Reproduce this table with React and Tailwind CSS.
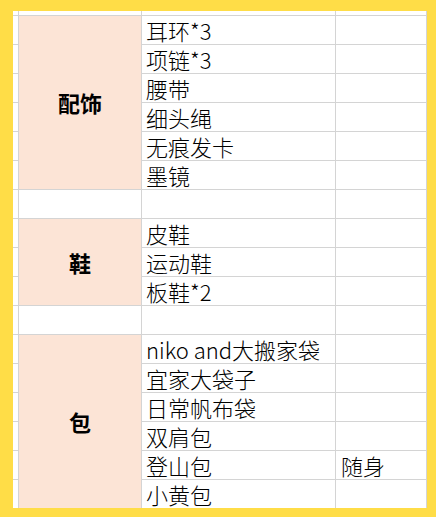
import React from "react";

const groups = [
  {
    cat: "配饰",
    items: ["耳环*3", "项链*3", "腰带", "细头绳", "无痕发卡", "墨镜"],
  },
  null,
  { cat: "鞋", items: ["皮鞋", "运动鞋", "板鞋*2"] },
  null,
  {
    cat: "包",
    items: ["niko and大搬家袋", "宜家大袋子", "日常帆布袋", "双肩包", "登山包", "小黄包"],
    notes: { 4: "随身" },
  },
];

const line = "border-r border-b border-[#d4d4d4]";
const text = "pl-[4px] pt-[1px] leading-[26px] text-[22px] font-light text-black whitespace-nowrap";

function Row({ first, span, cat, item, note, pink }) {
  return (
    <>
      <div className={line} />
      {first && (
        <div
          className={`${line} ${span === 6 ? "row-span-6" : "row-span-3"} bg-[#fce4d6] flex items-center justify-center text-[22px] font-bold text-black`}
        >
          {cat}
        </div>
      )}
      {!pink && <div className={line} />}
      <div className={`${line} ${text}`}>{item}</div>
      <div className={`${line} ${text} pl-[5px]`}>{note}</div>
    </>
  );
}

export default function App() {
  return (
    <div className="w-[436px] h-[517px] bg-[#ffdd47] pt-[11px] pl-[13px] pr-[9px] pb-[9px]">
      <div
        className="h-full bg-white overflow-hidden"
        style={{ fontFamily: '"Noto Sans CJK SC", "Noto Sans", sans-serif' }}
      >
        <div className="grid grid-cols-[6px_123px_194px_1fr] grid-rows-[5px_repeat(17,29px)]">
          <div className={line} />
          <div className={line} />
          <div className={line} />
          <div className={line} />
          {groups.map((g, gi) =>
            g ? (
              g.items.map((it, i) => (
                <Row
                  key={`${gi}-${i}`}
                  first={i === 0}
                  span={g.items.length}
                  cat={g.cat}
                  item={it}
                  note={g.notes ? g.notes[i] : ""}
                  pink
                />
              ))
            ) : (
              <Row key={`e${gi}`} item="" note="" />
            )
          )}
        </div>
      </div>
    </div>
  );
}
